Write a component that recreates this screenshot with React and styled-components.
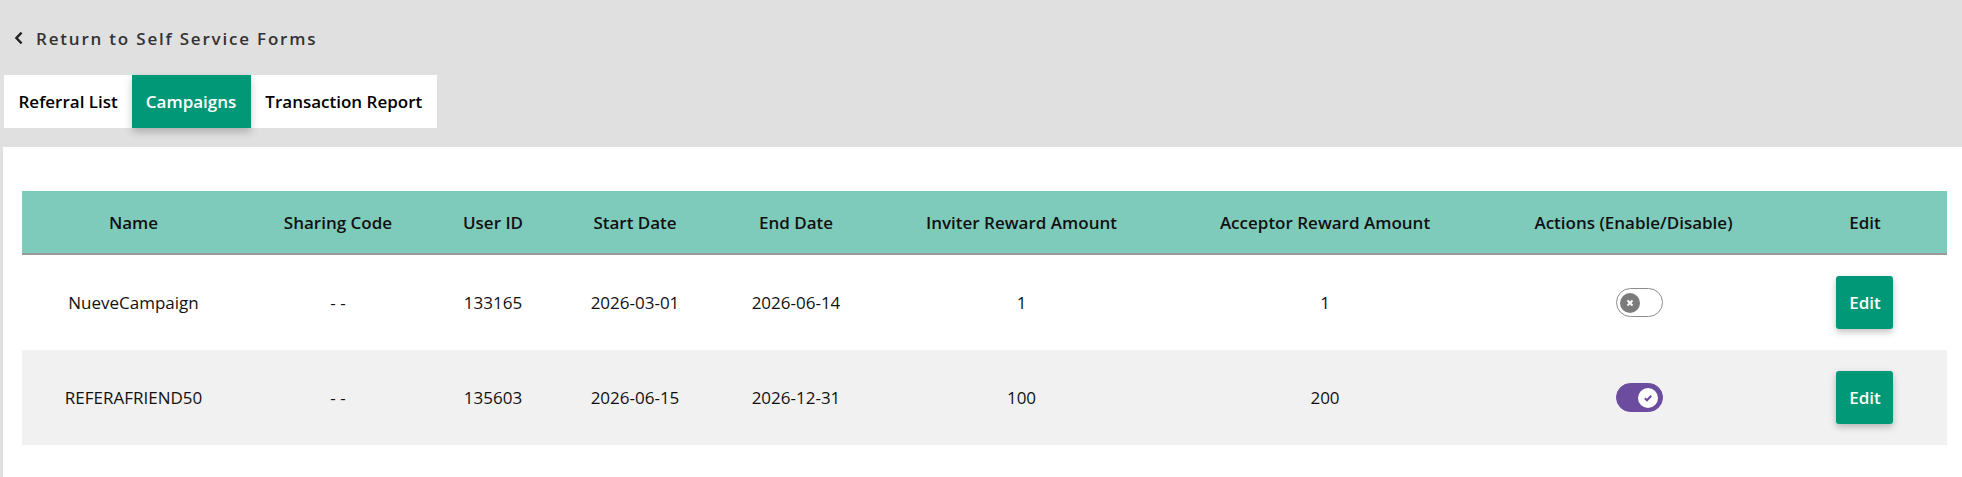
import React from "react";
import styled, { createGlobalStyle } from "styled-components";

const GlobalStyle = createGlobalStyle`
  html, body { margin: 0; padding: 0; }
  body {
    background: #e0e0e0;
    font-family: "Open Sans", "Liberation Sans", sans-serif;
    color: #111;
  }
  #root { min-height: 100vh; display: flex; flex-direction: column; }
`;

const Page = styled.div`
  flex: 1;
  display: flex;
  flex-direction: column;
`;

const TopBar = styled.div`
  display: flex;
  flex-direction: column;
  align-items: flex-start;
  padding: 26px 0 0 0;
`;

const BackLink = styled.a`
  display: flex;
  align-items: center;
  gap: 12px;
  height: 24px;
  padding-left: 14px;
  font-size: 17px;
  font-weight: 600;
  letter-spacing: 1.8px;
  color: #333;
  text-decoration: none;
  cursor: pointer;
`;

const Tabs = styled.div`
  display: flex;
  margin: 25px 0 0 4px;
  background: #fff;
`;

const Tab = styled.button`
  height: 53px;
  padding: 0 ${(p) => (p.$active ? "14.5px 0 13.5px" : "14.5px")};
  border: none;
  font-family: inherit;
  font-size: 17px;
  font-weight: 600;
  color: ${(p) => (p.$active ? "#fff" : "#000")};
  background: ${(p) => (p.$active ? "#009877" : "#fff")};
  box-shadow: ${(p) => (p.$active ? "0 4px 8px rgba(0,0,0,0.22)" : "none")};
  position: relative;
  z-index: ${(p) => (p.$active ? 1 : 0)};
  cursor: pointer;
`;

const Panel = styled.div`
  flex: 1;
  margin: 19px 0 0 3px;
  background: #fff;
  padding: 44px 15px 30px 19px;
`;

const Table = styled.table`
  width: 100%;
  border-collapse: separate;
  border-spacing: 0;
  table-layout: fixed;
`;

const HeadRow = styled.tr`
  background: #7fcbbb;
`;

const Th = styled.th`
  height: 62px;
  box-sizing: content-box;
  border-bottom: 2px solid #999;
  font-size: 17px;
  font-weight: 600;
  color: #111;
  text-align: center;
  padding: 0;
  white-space: nowrap;
`;

const Row = styled.tr`
  background: ${(p) => (p.$alt ? "#f1f1f1" : "#fff")};
`;

const Td = styled.td`
  height: 95px;
  font-size: 17px;
  font-weight: 400;
  color: #111;
  text-align: center;
  padding: 0;
  white-space: nowrap;
`;

const ToggleTrack = styled.span`
  display: inline-flex;
  align-items: center;
  justify-content: ${(p) => (p.$on ? "flex-end" : "flex-start")};
  box-sizing: border-box;
  width: 47px;
  height: 29px;
  margin-left: 12px;
  padding: 0 3.5px;
  border-radius: 15px;
  border: 1.5px solid ${(p) => (p.$on ? "#6b4c9e" : "#8c8c8c")};
  background: ${(p) => (p.$on ? "#6b4c9e" : "#fff")};
  vertical-align: middle;
  cursor: pointer;
`;

const Knob = styled.span`
  width: 20px;
  height: 20px;
  border-radius: 50%;
  background: ${(p) => (p.$on ? "#fff" : "#7b7b7b")};
  display: flex;
  align-items: center;
  justify-content: center;
`;

const EditButton = styled.button`
  width: 57px;
  height: 53px;
  border: none;
  border-radius: 3px;
  background: #009877;
  color: #fff;
  font-family: inherit;
  font-size: 17px;
  font-weight: 600;
  box-shadow: 0 3px 7px rgba(0,0,0,0.25);
  vertical-align: middle;
  cursor: pointer;
`;

const Chevron = () => (
  <svg width="10" height="14" viewBox="0 0 10 14" aria-hidden="true">
    <polyline points="7.6,1.6 2.4,7 7.6,12.4" fill="none" stroke="#222" strokeWidth="2.4" />
  </svg>
);

const Toggle = ({ on }) => (
  <ToggleTrack $on={on}>
    <Knob $on={on}>
      {on ? (
        <svg width="10" height="10" viewBox="0 0 10 10">
          <polyline points="1.8,5.2 4,7.3 8.2,2.8" fill="none" stroke="#6b4c9e" strokeWidth="2" />
        </svg>
      ) : (
        <svg width="8" height="8" viewBox="0 0 8 8">
          <path d="M1.5 1.5 L6.5 6.5 M6.5 1.5 L1.5 6.5" stroke="#fff" strokeWidth="2" />
        </svg>
      )}
    </Knob>
  </ToggleTrack>
);

const columns = [
  ["Name", 223],
  ["Sharing Code", 186],
  ["User ID", 124],
  ["Start Date", 160],
  ["End Date", 162],
  ["Inviter Reward Amount", 289],
  ["Acceptor Reward Amount", 318],
  ["Actions (Enable/Disable)", 299],
  ["Edit", 164],
];

const rows = [
  { name: "NueveCampaign", code: "- -", user: "133165", start: "2026-03-01", end: "2026-06-14", inviter: "1", acceptor: "1", on: false },
  { name: "REFERAFRIEND50", code: "- -", user: "135603", start: "2026-06-15", end: "2026-12-31", inviter: "100", acceptor: "200", on: true },
];

export default function App() {
  const total = columns.reduce((s, c) => s + c[1], 0);
  return (
    <>
      <GlobalStyle />
      <Page>
        <TopBar>
          <BackLink>
            <Chevron />
            <span>Return to Self Service Forms</span>
          </BackLink>
          <Tabs>
            <Tab>Referral List</Tab>
            <Tab $active>Campaigns</Tab>
            <Tab>Transaction Report</Tab>
          </Tabs>
        </TopBar>
        <Panel>
          <Table>
            <colgroup>
              {columns.map(([label, w]) => (
                <col key={label} style={{ width: `${(w / total) * 100}%` }} />
              ))}
            </colgroup>
            <thead>
              <HeadRow>
                {columns.map(([label]) => (
                  <Th key={label}>{label}</Th>
                ))}
              </HeadRow>
            </thead>
            <tbody>
              {rows.map((r, i) => (
                <Row key={r.name} $alt={i % 2 === 1}>
                  <Td>{r.name}</Td>
                  <Td>{r.code}</Td>
                  <Td>{r.user}</Td>
                  <Td>{r.start}</Td>
                  <Td>{r.end}</Td>
                  <Td>{r.inviter}</Td>
                  <Td>{r.acceptor}</Td>
                  <Td><Toggle on={r.on} /></Td>
                  <Td><EditButton>Edit</EditButton></Td>
                </Row>
              ))}
            </tbody>
          </Table>
        </Panel>
      </Page>
    </>
  );
}
